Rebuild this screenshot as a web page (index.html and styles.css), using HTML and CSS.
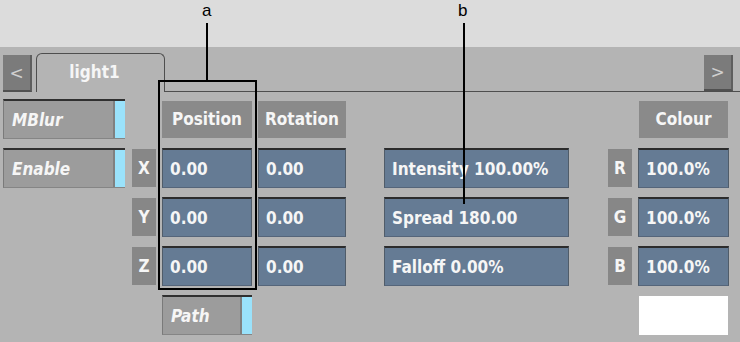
FILE: index.html
```html
<!DOCTYPE html>
<html lang="en">
<head>
    <meta charset="UTF-8">
    <title>Light Setup</title>
    <link rel="stylesheet" href="styles.css">
</head>
<body>

    <div class="callouts">
        <span class="callout-letter letter-a">a</span>
        <span class="callout-letter letter-b">b</span>
    </div>

    <div class="panel">
        <div class="tab-row">
            <div class="nav-btn">&lt;</div>
            <div class="tab">light1</div>
            <div class="tab-rest">
                <div class="nav-btn">&gt;</div>
            </div>
        </div>

        <div class="grid">
            <!-- header row -->
            <div class="toggle c-a">MBlur<span class="led"></span></div>
            <div class="head c-pos">Position</div>
            <div class="head c-rot">Rotation</div>
            <div class="head c-col">Colour</div>

            <!-- X -->
            <div class="toggle c-a">Enable<span class="led"></span></div>
            <div class="axis c-lab">X</div>
            <div class="field c-pos">0.00</div>
            <div class="field c-rot">0.00</div>
            <div class="field c-int">Intensity 100.00%</div>
            <div class="axis c-rgb">R</div>
            <div class="field c-col">100.0%</div>

            <!-- Y -->
            <div class="axis c-lab">Y</div>
            <div class="field c-pos">0.00</div>
            <div class="field c-rot">0.00</div>
            <div class="field c-int">Spread 180.00</div>
            <div class="axis c-rgb">G</div>
            <div class="field c-col">100.0%</div>

            <!-- Z -->
            <div class="axis c-lab">Z</div>
            <div class="field c-pos">0.00</div>
            <div class="field c-rot">0.00</div>
            <div class="field c-int">Falloff 0.00%</div>
            <div class="axis c-rgb">B</div>
            <div class="field c-col">100.0%</div>

            <!-- bottom row -->
            <div class="toggle c-pos">Path<span class="led"></span></div>
            <div class="swatch c-col"></div>
        </div>

        <!-- callout lines over the panel -->
        <div class="callout-box"></div>
        <div class="callout-line line-a"></div>
        <div class="callout-line line-b"></div>
    </div>

</body>
</html>
```

FILE: styles.css
```css
body {
    margin: 0;
    width: 740px;
    height: 342px;
    overflow: hidden;
    background-color: #dcdcdc;
    font-family: "DejaVu Sans Condensed", "DejaVu Sans", sans-serif;
    font-weight: bold;
    font-size: 17px;
    color: #f6f6f6;
}

.callouts {
    position: relative;
    height: 47px;
}

.callout-letter {
    position: absolute;
    top: 1px;
    font-family: "Liberation Sans", Arial, sans-serif;
    font-weight: normal;
    font-size: 17px;
    color: #000000;
}

.letter-a { left: 202px; }
.letter-b { left: 458px; }

.panel {
    position: relative;
    height: 295px;
    background-color: #b4b4b4;
    padding-top: 6px;
    box-sizing: border-box;
}

/* tabs */
.tab-row {
    display: flex;
    align-items: flex-end;
    height: 39px;
    padding-left: 3px;
}

.nav-btn {
    width: 27px;
    height: 35px;
    background-color: #7b7b7b;
    border-right: 2px solid #5e5e5e;
    border-bottom: 2px solid #505050;
    color: #cfcfcf;
    font-family: "DejaVu Sans", sans-serif;
    font-weight: normal;
    font-size: 17px;
    display: flex;
    align-items: center;
    justify-content: center;
}

.tab {
    width: 129px;
    height: 39px;
    margin-left: 4px;
    border: 1px solid #4e4e4e;
    border-bottom: none;
    border-radius: 6px 6px 0 0;
    display: flex;
    align-items: center;
    justify-content: center;
    padding: 0 12px 2px 0;
    box-sizing: border-box;
}

.tab-rest {
    flex: 1;
    display: flex;
    justify-content: flex-end;
    align-items: flex-end;
    border-bottom: 1px solid #4e4e4e;
    padding-right: 7px;
    height: 38px;
}

.tab-rest .nav-btn {
    height: 34px;
}

/* main grid */
.grid {
    display: grid;
    grid-template-columns: 3px 122px 7px 24px 6px 90px 6px 88px 38px 185px 39px 24px 6px 91px;
    grid-template-rows: repeat(5, 40px);
    row-gap: 9px;
    margin-top: 7px;
}

.c-a   { grid-column: 2; }
.c-lab { grid-column: 4; }
.c-pos { grid-column: 6; }
.c-rot { grid-column: 8; }
.c-int { grid-column: 10; }
.c-rgb { grid-column: 12; }
.c-col { grid-column: 14; }

.toggle {
    position: relative;
    background-color: #9c9c9c;
    border-top: 2px solid #303030;
    border-left: 1px solid #7a7a7a;
    border-bottom: 1px solid #858585;
    font-style: italic;
    padding-left: 8px;
    display: flex;
    align-items: center;
}

.led {
    position: absolute;
    right: 0;
    top: 0;
    bottom: 0;
    width: 10px;
    background-color: #9ae2fb;
    border-left: 2px solid #808080;
}

.head {
    align-self: center;
    height: 37px;
    background-color: #8a8a8a;
    display: flex;
    align-items: center;
    justify-content: center;
}

.c-col.head {
    margin-left: 1px;
    margin-right: 1px;
}

.axis {
    align-self: center;
    height: 38px;
    background-color: #878787;
    display: flex;
    align-items: center;
    justify-content: center;
}

.field {
    background-color: #657b94;
    border-top: 2px solid #2c2c2c;
    border-left: 1px solid #505c69;
    border-right: 1px solid #505c69;
    border-bottom: 1px solid #55657a;
    padding-left: 7px;
    display: flex;
    align-items: center;
}

.swatch {
    background-color: #ffffff;
    margin: 1px 1px 0 1px;
}

/* callout overlay */
.callout-box {
    position: absolute;
    left: 158px;
    top: 33px;
    width: 95px;
    height: 206px;
    border: 2px solid #000000;
}

.callout-line {
    position: absolute;
    width: 2px;
    background-color: #000000;
}

.line-a {
    left: 206px;
    top: -24px;
    height: 57px;
}

.line-b {
    left: 463px;
    top: -24px;
    height: 181px;
}
```
